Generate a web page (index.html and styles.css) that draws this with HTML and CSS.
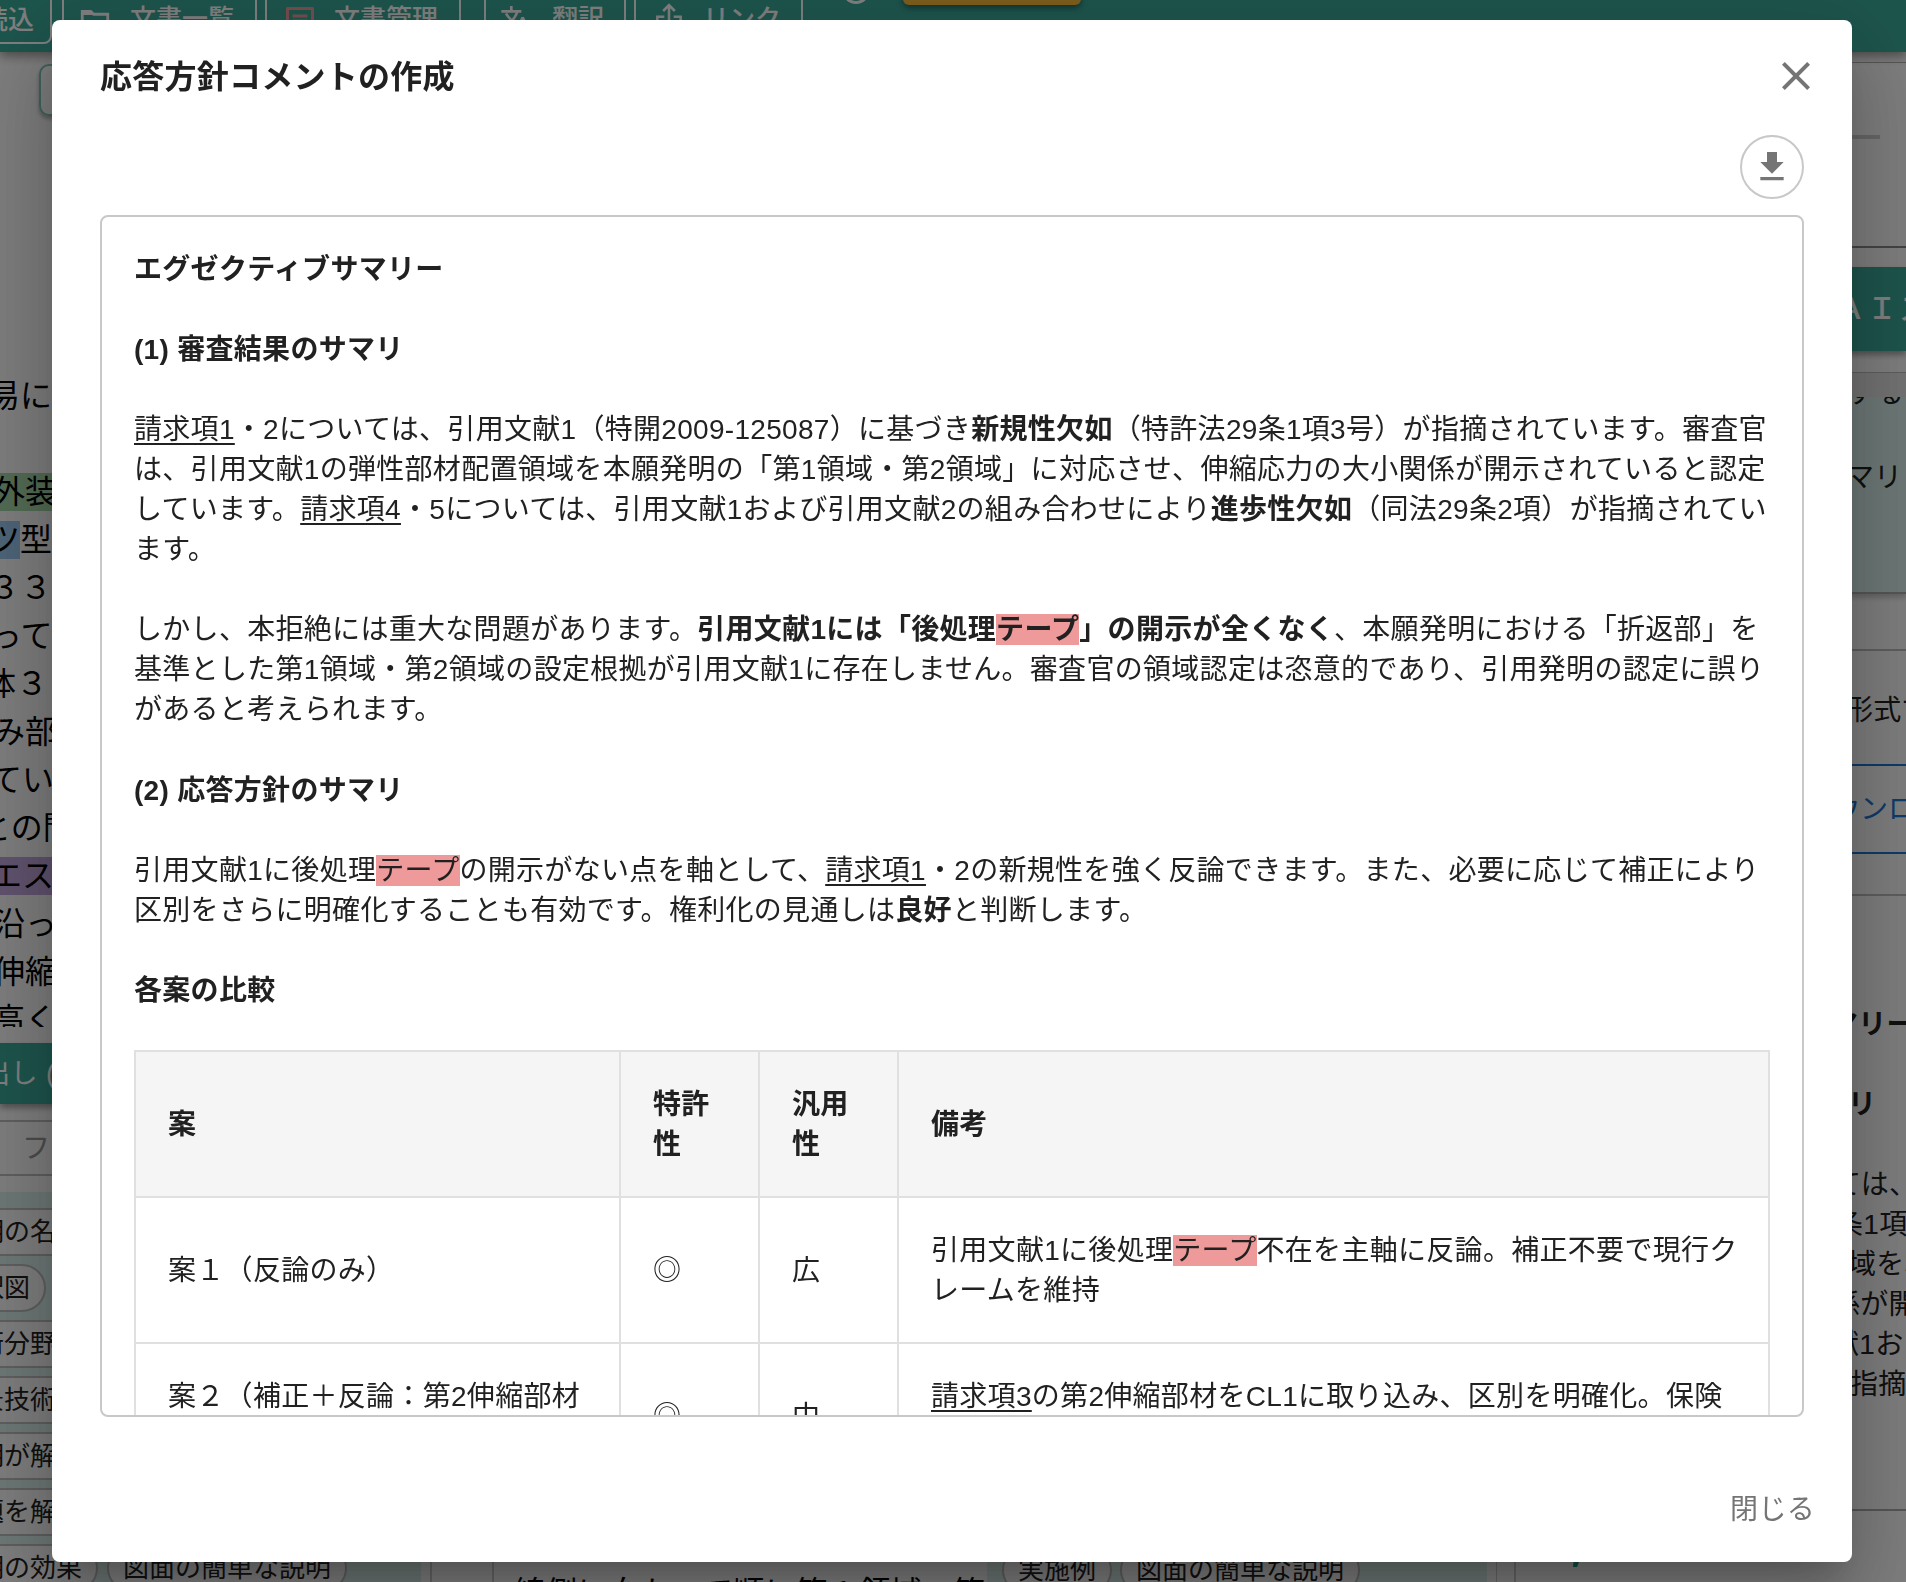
FILE: index.html
```html
<!DOCTYPE html>
<html lang="ja">
<head>
    <meta charset="UTF-8">
    <meta name="viewport" content="width=device-width, initial-scale=1.0">
    <title>応答方針コメントの作成</title>
    <link rel="stylesheet" href="styles.css">
</head>
<body>

    <div class="page">
        <div class="header">
            <div class="header-btn btn-read">読込</div>
            <div class="header-btn btn-list">
                <svg width="34" height="34" viewBox="0 0 24 24"><path d="M3 6V4.500h6l2 2h10V19H3z" fill="none" stroke="currentColor" stroke-width="2"/><path d="M3 4h6l2 3H3z" fill="currentColor"/></svg>
                <span>文書一覧</span>
            </div>
            <div class="header-btn btn-manage">
                <svg class="icon-red" width="30" height="30" viewBox="0 0 24 24"><path d="M2 2h20v20H2zM6 8h12M6 12h12M6 16h8" fill="none" stroke="currentColor" stroke-width="2.400" stroke-linejoin="round"/></svg>
                <span>文書管理</span>
            </div>
            <div class="header-btn btn-translate">
                <svg width="32" height="32" viewBox="0 0 24 24"><path d="M1 5.500h15M8.500 1.500v4M13 5.500C12 10 8 14 3 17M4.500 7c2 4 5 6 8 8M17 10l-4 9M17 10l4 9" fill="none" stroke="currentColor" stroke-width="2"/></svg>
                <span>翻訳</span>
            </div>
            <div class="header-btn btn-link">
                <svg width="28" height="34" viewBox="0 0 24 28"><path d="M12 17V3M7 8l5-5 5 5M8 13H2v12h20V13h-6" fill="none" stroke="currentColor" stroke-width="2.200"/></svg>
                <span>リンク</span>
            </div>
            <div class="header-circle"></div>
            <div class="header-orange"></div>
        </div>

        <div class="columns">
            <div class="left">
                <div class="tab-box"></div>
                <div class="doc-text">
                    <p>易に</p>
                    <p></p>
                    <p><span class="hl-green">外装装</span></p>
                    <p><span class="hl-blue">ツ</span>型</p>
                    <p>３３</p>
                    <p>って</p>
                    <p>体３</p>
                    <p>み部</p>
                    <p>てい</p>
                    <p>との間</p>
                    <p><span class="hl-purple">エスス</span></p>
                    <p>沿っ</p>
                    <p>伸縮</p>
                    <p>高く</p>
                </div>
                <div class="teal-btn">出し (</div>
                <div class="filter">フ</div>
                <div class="chips">
                    <div class="chip-row"><span class="chip">明の名称</span></div>
                    <div class="chip-row"><span class="chip chip-map">択図</span></div>
                    <div class="chip-row"><span class="chip chip-wide">術分野</span></div>
                    <div class="chip-row"><span class="chip chip-wide">景技術</span></div>
                    <div class="chip-row"><span class="chip chip-wide">明が解</span></div>
                    <div class="chip-row"><span class="chip chip-wide">題を解</span></div>
                    <div class="chip-row"><span class="chip">明の効果</span><span class="chip">図面の簡単な説明</span></div>
                </div>
            </div>

            <div class="middle">
                <div class="gutter"></div>
                <div class="middle-text">線側に向かって順に第１領域、第</div>
                <div class="middle-chips">
                    <span class="chip">実施例</span><span class="chip">図面の簡単な説明</span>
                </div>
                <div class="gutter-right"></div>
            </div>

            <div class="right">
                <div class="slider-box"><div class="slider"></div></div>
                <div class="ai-btn">ＡＩス</div>
                <div class="ai-strip"></div>
                <div class="summary-panel">
                    <p class="cut">する</p>
                    <p>マリ</p>
                </div>
                <div class="export-box">
                    <p>形式で</p>
                    <div class="outline-btn">ウンロ</div>
                </div>
                <div class="result-box">
                    <p class="bold r1">マリー</p>
                    <p class="bold r2">リ</p>
                    <p class="r3">ては、</p>
                    <p class="r4">条1項</p>
                    <p class="r5">域を本</p>
                    <p class="r6">係が開</p>
                    <p class="r7">献1お</p>
                    <p class="r8">指摘</p>
                </div>
                <svg class="pen" width="12" height="22" viewBox="0 0 12 22"><path d="M2 0h10L4 20H0z" fill="#16a085"/></svg>
            </div>
        </div>
    </div>

    <div class="backdrop">
        <div class="dialog">
            <div class="dialog-title">
                <h2>応答方針コメントの作成</h2>
                <svg width="48" height="48" viewBox="0 0 24 24"><path d="M19 6.410L17.590 5 12 10.590 6.410 5 5 6.410 10.590 12 5 17.590 6.410 19 12 13.410 17.590 19 19 17.590 13.410 12z" fill="#757575"/></svg>
            </div>

            <div class="dialog-tools">
                <button class="download">
                    <svg width="40" height="40" viewBox="0 0 24 24"><path d="M19 9h-4V3H9v6H5l7 7 7-7zM5 18v2h14v-2H5z" fill="#757575"/></svg>
                </button>
            </div>

            <div class="content">
                <p><b>エグゼクティブサマリー</b></p>
                <p><b>(1) 審査結果のサマリ</b></p>
                <p><u>請求項1</u>・2については、引用文献1（特開2009-125087）に基づき<b>新規性欠如</b>（特許法29条1項3号）が指摘されています。審査官<br>は、引用文献1の弾性部材配置領域を本願発明の「第1領域・第2領域」に対応させ、伸縮応力の大小関係が開示されていると認定<br>しています。<u>請求項4</u>・5については、引用文献1および引用文献2の組み合わせにより<b>進歩性欠如</b>（同法29条2項）が指摘されてい<br>ます。</p>
                <p>しかし、本拒絶には重大な問題があります。<b>引用文献1には「後処理<mark>テープ</mark>」の開示が全くなく</b>、本願発明における「折返部」を<br>基準とした第1領域・第2領域の設定根拠が引用文献1に存在しません。審査官の領域認定は恣意的であり、引用発明の認定に誤り<br>があると考えられます。</p>
                <p><b>(2) 応答方針のサマリ</b></p>
                <p>引用文献1に後処理<mark>テープ</mark>の開示がない点を軸として、<u>請求項1</u>・2の新規性を強く反論できます。また、必要に応じて補正により<br>区別をさらに明確化することも有効です。権利化の見通しは<b>良好</b>と判断します。</p>
                <p><b>各案の比較</b></p>
                <table>
                    <colgroup>
                        <col class="col-plan">
                        <col class="col-mark">
                        <col class="col-mark">
                        <col>
                    </colgroup>
                    <tr>
                        <th>案</th>
                        <th>特許<br>性</th>
                        <th>汎用<br>性</th>
                        <th>備考</th>
                    </tr>
                    <tr>
                        <td>案１（反論のみ）</td>
                        <td>◎</td>
                        <td>広</td>
                        <td>引用文献1に後処理<mark>テープ</mark>不在を主軸に反論。補正不要で現行ク<br>レームを維持</td>
                    </tr>
                    <tr>
                        <td>案２（補正＋反論：第2伸縮部材<br>&nbsp;</td>
                        <td>◎</td>
                        <td>中</td>
                        <td><u>請求項3</u>の第2伸縮部材をCL1に取り込み、区別を明確化。保険<br>&nbsp;</td>
                    </tr>
                </table>
            </div>

            <div class="dialog-actions">
                <button class="close-btn">閉じる</button>
            </div>
        </div>
    </div>

</body>
</html>
```
FILE: styles.css
```css
* {
    box-sizing: border-box;
}

body {
    margin: 0;
    font-family: "Liberation Sans", "Noto Sans CJK JP", sans-serif;
    color: #212121;
    overflow: hidden;
}

p {
    margin: 0;
}

/* page under the dialog */
.page {
    height: 1582px;
    overflow: hidden;
    background-color: #fbfbfb;
    white-space: nowrap;
}

.header {
    height: 52px;
    display: flex;
    align-items: flex-start;
    background-color: #3aa999;
    color: #fff;
    box-shadow: 0 4px 10px rgba(0, 0, 0, 0.4);
}

.header-btn {
    height: 54px;
    margin-top: -10px;
    border: 2px solid #fff;
    border-radius: 8px;
    display: flex;
    align-items: center;
    font-size: 26px;
    font-weight: 500;
}

.header-btn svg {
    margin-top: 10px;
}

.header-btn span {
    margin-top: -1px;
}

.btn-read {
    width: 72px;
    margin-left: -20px;
    margin-right: 10px;
}

.btn-list {
    width: 195px;
    padding-left: 14px;
    gap: 18px;
    margin-right: 8px;
}

.btn-manage {
    width: 196px;
    padding-left: 18px;
    gap: 19px;
    margin-right: 23px;
}

.header .btn-manage svg {
    margin-top: 7px;
}

.btn-translate {
    width: 142px;
    padding-left: 14px;
    gap: 20px;
    margin-right: 8px;
}

.header .btn-translate svg {
    margin-top: 5px;
}

.btn-link {
    width: 169px;
    padding-left: 19px;
    gap: 20px;
}

.header .btn-link svg {
    margin-top: 1px;
}

.icon-red {
    color: #ef9a9a;
}

.header-circle {
    width: 28px;
    height: 28px;
    margin: -24px 0 0 39px;
    border: 3px solid #fff;
    border-radius: 50%;
}

.header-orange {
    width: 178px;
    height: 20px;
    margin: -15px 0 0 33px;
    border-radius: 6px;
    background-color: #fbbb3c;
    box-shadow: 0 3px 6px rgba(0, 0, 0, 0.4);
}

.columns {
    height: 1530px;
    display: grid;
    grid-template-columns: 430px 1084px 392px;
}

.left {
    display: flex;
    flex-direction: column;
}

.tab-box {
    width: 200px;
    height: 52px;
    margin: 12px 0 0 39px;
    border: 2px solid #7cc4b8;
    border-radius: 10px;
    box-shadow: 0 3px 4px rgba(0, 0, 0, 0.3);
}

.doc-text {
    height: 911px;
    padding-top: 256px;
    overflow: hidden;
    font-size: 32px;
    line-height: 48px;
    color: #000;
}

.doc-text p {
    height: 48px;
    margin-left: -12px;
}

.doc-text p:nth-child(3),
.doc-text p:nth-child(8),
.doc-text p:nth-child(12),
.doc-text p:nth-child(13),
.doc-text p:nth-child(14) {
    margin-left: -7px;
}

.doc-text p:nth-child(6),
.doc-text p:nth-child(9),
.doc-text p:nth-child(11) {
    margin-left: -10px;
}

.doc-text p:nth-child(7) {
    margin-left: -16px;
}

.doc-text p:nth-child(10) {
    margin-left: -21px;
}

.doc-text span {
    display: inline-block;
    height: 38px;
    line-height: 38px;
}

.hl-green {
    background-color: #a5d6a7;
}

.hl-blue {
    background-color: #9ac8ee;
}

.hl-purple {
    background-color: #c0a5dc;
}

.teal-btn {
    height: 61px;
    margin-top: 16px;
    text-indent: -17px;
    background-color: #3aa999;
    color: #fff;
    font-size: 27px;
    line-height: 63px;
    letter-spacing: 0.500px;
    box-shadow: 0 4px 6px rgba(0, 0, 0, 0.35);
}

.filter {
    height: 56px;
    margin-top: 16px;
    padding-left: 22px;
    border-top: 2px solid #bdbdbd;
    border-bottom: 2px solid #bdbdbd;
    color: #999;
    font-size: 28px;
    line-height: 53px;
}

.chips {
    width: 421px;
    flex: 1;
    margin-top: 16px;
    padding-top: 16px;
    display: flex;
    flex-direction: column;
    gap: 8px;
    background-color: #daf0ec;
}

.chip-row {
    display: flex;
    gap: 9px;
    margin-left: -38px;
}

.chip {
    flex: none;
    height: 48px;
    padding: 0 14px;
    border: 2px solid #bdbdbd;
    border-radius: 24px;
    background-color: #fbfbfb;
    font-size: 26px;
    line-height: 45px;
}

.chip-wide {
    padding-right: 40px;
}

.middle {
    display: flex;
    align-items: flex-end;
}

.gutter {
    width: 64px;
    height: 100%;
    border-left: 2px solid #ccc;
    border-right: 2px solid #ccc;
}

.middle-text {
    width: 493px;
    height: 18px;
    padding-left: 20px;
    overflow: hidden;
    color: #000;
    font-size: 31.500px;
    line-height: 39px;
}

.middle-chips {
    width: 500px;
    height: 80px;
    display: flex;
    gap: 8px;
    padding: 42px 0 0 15px;
    background-color: #daf0ec;
}

.middle-chips .chip {
    margin-top: -8px;
}

.gutter-right {
    width: 10px;
    height: 100%;
    border-right: 1px solid #ccc;
}

.right {
    display: flex;
    flex-direction: column;
    border-left: 2px solid #ccc;
    font-size: 28px;
    line-height: 40px;
}

.slider-box {
    height: 186px;
    margin-top: 10px;
    padding-top: 72px;
    border-top: 1px solid #aaa;
    border-bottom: 2px solid #888;
}

.slider {
    width: 364px;
    height: 4px;
    background-color: #ccc;
}

.ai-btn {
    flex: none;
    height: 84px;
    margin-top: 19px;
    padding-left: 319px;
    background-color: #3aa999;
    color: #fff;
    font-size: 30px;
    font-weight: 500;
    line-height: 83px;
    letter-spacing: 2px;
    overflow: hidden;
    box-shadow: 0 4px 6px rgba(0, 0, 0, 0.35);
}

.ai-strip {
    height: 25px;
    margin-top: 21px;
    border-top: 1px solid #bbb;
    background-color: #e4e4e4;
}

.summary-panel {
    height: 197px;
    padding-left: 330px;
    overflow: hidden;
    background-color: #daf0ec;
    border-bottom: 2px solid #aaa;
    box-shadow: 0 4px 5px rgba(0, 0, 0, 0.2);
}

.summary-panel p {
    margin-top: 44px;
}

.summary-panel .cut {
    margin-top: -23px;
    letter-spacing: 2px;
}

.export-box {
    height: 247px;
    margin-top: 55px;
    padding-top: 40px;
    border-top: 2px solid #bbb;
    border-bottom: 2px solid #bbb;
}

.export-box p {
    padding-left: 329px;
    letter-spacing: 0.300px;
}

.outline-btn {
    height: 90px;
    margin-top: 33px;
    padding-left: 316px;
    border-top: 2px solid #1976d2;
    border-bottom: 2px solid #1976d2;
    color: #1976d2;
    line-height: 87px;
}

.result-box {
    height: 615px;
    padding-top: 109px;
    border-bottom: 2px solid #aaa;
    letter-spacing: 0.300px;
}

.bold {
    font-weight: bold;
    margin-bottom: 40px;
}

.r1 { padding-left: 314px; }
.r2 { padding-left: 332px; }
.r3 { padding-left: 317px; }
.r4 { padding-left: 319px; }
.r5 { padding-left: 332px; }
.r6 { padding-left: 316px; }
.r7 { padding-left: 315px; }
.r8 { padding-left: 334px; }

.pen {
    margin: 36px 0 0 57px;
}

/* dialog */
.backdrop {
    position: fixed;
    inset: 0;
    display: flex;
    justify-content: center;
    padding: 20px 0;
    background-color: rgba(0, 0, 0, 0.5);
}

.dialog {
    width: 1800px;
    height: 1542px;
    margin-left: -2px;
    padding: 0 48px;
    display: flex;
    flex-direction: column;
    background-color: #fff;
    border-radius: 8px;
    box-shadow: 0 22px 30px -14px rgba(0, 0, 0, 0.2),
        0 48px 76px 6px rgba(0, 0, 0, 0.14),
        0 18px 92px 16px rgba(0, 0, 0, 0.12);
}

.dialog-title {
    height: 80px;
    display: flex;
    justify-content: space-between;
    padding-top: 32px;
    margin-right: -16px;
}

.dialog-title h2 {
    margin: 0;
    font-size: 32px;
    line-height: 50px;
    letter-spacing: 0.240px;
}

.dialog-tools {
    display: flex;
    justify-content: flex-end;
    margin: 35px 0 16px;
}

.download {
    width: 64px;
    height: 64px;
    padding: 0;
    display: flex;
    align-items: center;
    justify-content: center;
    border: 2px solid #c8c8c8;
    border-radius: 50%;
    background-color: #fff;
}

.content {
    height: 1202px;
    flex: none;
    padding: 33px 32px 32px;
    overflow: hidden;
    border: 2px solid #c8c8c8;
    border-radius: 8px;
    font-size: 28px;
    line-height: 40.040px;
    letter-spacing: 0.300px;
    white-space: nowrap;
}

.content p {
    margin-bottom: 40.040px;
}

.content p:nth-last-child(2) {
    margin-bottom: 39px;
}

u {
    text-underline-offset: 4px;
    text-decoration-thickness: 2px;
}

mark {
    background-color: #ef9a9a;
    color: inherit;
}

table {
    width: 1636px;
    table-layout: fixed;
    border-collapse: collapse;
}

.col-plan {
    width: 485px;
}

.col-mark {
    width: 139px;
}

th,
td {
    height: 146px;
    padding: 33px 32px 31px;
    border: 2px solid #e0e0e0;
    text-align: left;
    line-height: 40px;
}

th {
    background-color: #f5f5f5;
}

.dialog-actions {
    display: flex;
    justify-content: flex-end;
    margin: 68px -11px 0 0;
}

.close-btn {
    padding: 0;
    border: none;
    background: none;
    color: #757575;
    font-family: inherit;
    font-size: 28px;
    line-height: 50px;
    letter-spacing: 0.300px;
}
```
